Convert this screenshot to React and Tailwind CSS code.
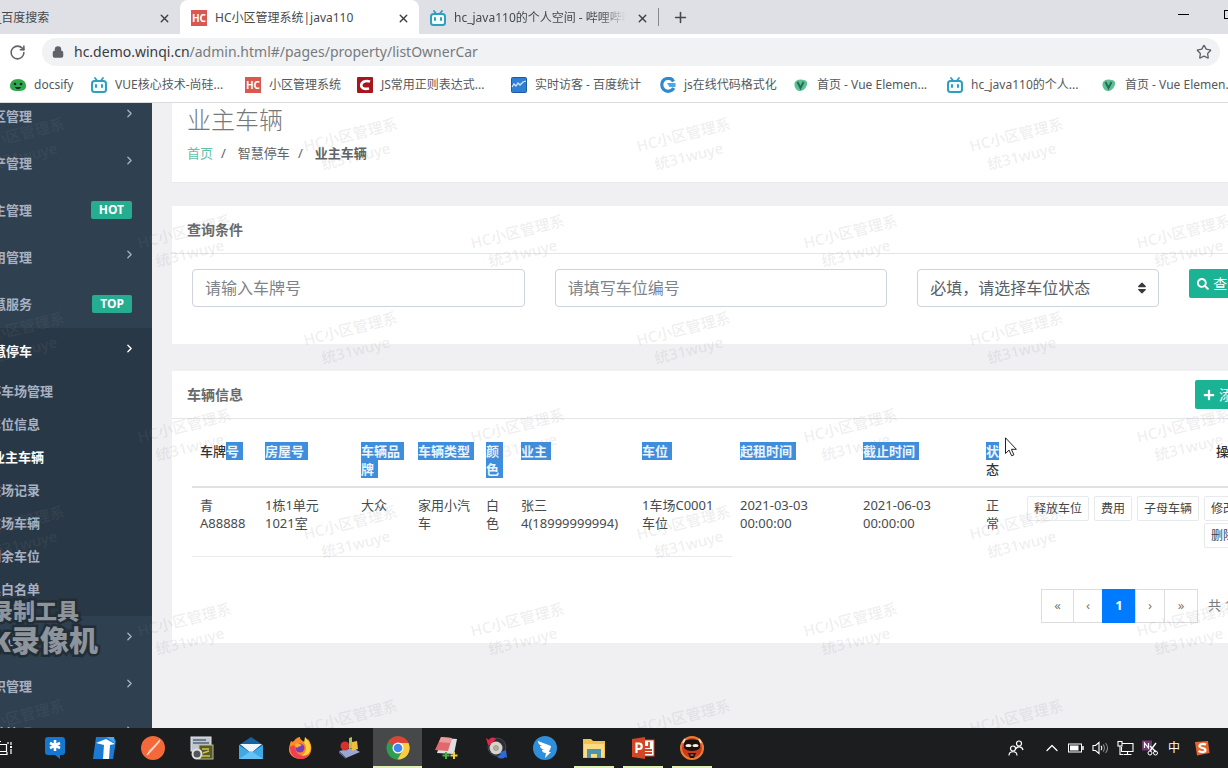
import React, { useState } from "react";
import { ChevronRight, ChevronUp, Lock, Plus, RotateCw, Star, X } from "lucide-react";
import { FaPlus, FaSearch, FaSort } from "react-icons/fa";

/* ---------- small site icons ---------- */

const HcIcon = () => (
  <span className="flex h-4 w-4 shrink-0 items-center justify-center bg-[#d9584f] text-[10px] leading-none font-bold text-white">
    HC
  </span>
);

const BiliIcon = () => (
  <svg className="h-4 w-4 shrink-0" viewBox="0 0 16 16" fill="none">
    <path d="M4 1l2 2.5M12 1l-2 2.5" stroke="#2f9fc0" strokeWidth="1.8" strokeLinecap="round" />
    <rect x="1" y="4" width="14" height="11" rx="2.5" stroke="#2f9fc0" strokeWidth="2" fill="#f4fcff" />
    <path d="M5 8v2M11 8v2" stroke="#2f9fc0" strokeWidth="2" strokeLinecap="round" />
  </svg>
);

const DocsifyIcon = () => (
  <svg className="h-4 w-4 shrink-0" viewBox="0 0 16 16">
    <path d="M8 2c5 0 8 3 8 7 0 4-3 5-8 5s-8-1-8-5c0-4 3-7 8-7z" fill="#2fa84a" />
    <circle cx="5" cy="7" r="1.3" fill="#123" />
    <circle cx="11" cy="7" r="1.3" fill="#123" />
    <path d="M5.5 10.5c1.5 1.6 3.5 1.6 5 0z" fill="#123" stroke="#123" />
  </svg>
);

const CsdnIcon = () => (
  <svg className="h-4 w-4 shrink-0" viewBox="0 0 16 16">
    <rect width="16" height="16" rx="1" fill="#a8161d" />
    <path d="M13 4.6C9 3 4.500 4.500 4.200 8.200 4 11.500 8 12.500 12 11.400" fill="none" stroke="#fff" strokeWidth="2.600" />
  </svg>
);

const ChartIcon = () => (
  <svg className="h-4 w-4 shrink-0" viewBox="0 0 16 16">
    <rect x="0.500" y="0.500" width="15" height="15" rx="1" fill="#2f7fd6" stroke="#205a9c" />
    <path d="M1 10l2-3 2 2 2-3 2 2 3-3 3-1" fill="none" stroke="#d5ecff" strokeWidth="1.300" />
  </svg>
);

const JsIcon = () => (
  <svg className="h-4 w-4 shrink-0" viewBox="0 0 16 16">
    <path
      d="M13.500 4.500C12 1.500 9 1 7 1.500 3.500 2.200 1.800 5 1.800 8c0 3.500 2.700 6.300 6.200 6.300 2.500 0 4.500-1 5.800-3.300"
      fill="none"
      stroke="#2e8ad0"
      strokeWidth="3.200"
    />
    <path d="M7 6h8.500v4H9.500z" fill="#4ea6e4" />
  </svg>
);

const VueIcon = () => (
  <svg className="h-4 w-4 shrink-0" viewBox="0 0 16 16">
    <path d="M2 5c2-3 6-3 9-2 3 .5 4 3 2.500 6-1 3-4 5-7 5S0 9 2 5z" fill="#5cc094" />
    <path d="M4.500 5l3 6 3-6" fill="none" stroke="#2a6b55" strokeWidth="2" />
  </svg>
);

/* ---------- browser chrome ---------- */

const bookmarks = [
  { label: "docsify", Icon: DocsifyIcon, width: "w-[81px]" },
  { label: "VUE核心技术-尚硅...", Icon: BiliIcon, width: "w-[154px]" },
  { label: "小区管理系统", Icon: HcIcon, width: "w-[112px]" },
  { label: "JS常用正则表达式...", Icon: CsdnIcon, width: "w-[154px]" },
  { label: "实时访客 - 百度统计", Icon: ChartIcon, width: "w-[149px]" },
  { label: "js在线代码格式化", Icon: JsIcon, width: "w-[133px]" },
  { label: "首页 - Vue Elemen...", Icon: VueIcon, width: "w-[154px]" },
  { label: "hc_java110的个人...", Icon: BiliIcon, width: "w-[154px]" },
  { label: "首页 - Vue Elemen...", Icon: VueIcon, width: "w-[154px]" },
];

const CloseButton = () => (
  <button aria-label="关闭标签页" className="flex h-4 w-4 shrink-0 items-center justify-center text-[#3c4043]">
    <X size={13} strokeWidth={2.5} />
  </button>
);

const TabBar = () => (
  <div className="flex h-[34px] shrink-0 items-stretch bg-[#dee0e6] text-xs whitespace-nowrap text-[#45494d]">
    <div className="flex w-[180px] items-center justify-between pt-0.5 pr-2">
      <span className="-ml-1">_百度搜索</span>
      <CloseButton />
    </div>
    <div className="flex w-[239px] items-center gap-2 rounded-t-lg bg-white pt-0.5 pr-2 pl-[11px]">
      <HcIcon />
      <span className="flex-1">HC小区管理系统|java110</span>
      <CloseButton />
    </div>
    <div className="flex w-[239px] items-center gap-2 pt-0.5 pr-2 pl-[11px]">
      <BiliIcon />
      <span className="flex-1 overflow-hidden [mask-image:linear-gradient(to_right,#000_85%,transparent)]">
        hc_java110的个人空间 - 哔哩哔哩
      </span>
      <CloseButton />
    </div>
    <div className="my-2 w-px bg-[#85888d]" />
    <button aria-label="新建标签页" className="ml-[11px] flex w-5 items-center justify-center">
      <Plus size={17} strokeWidth={2.2} />
    </button>
    <div className="ml-auto flex items-center gap-[35px] pb-1.5 text-black">
      <button aria-label="最小化" className="h-px w-[11px] bg-black" />
      <button aria-label="最大化" className="h-[9px] w-[4px] border border-r-0 border-black" />
    </div>
  </div>
);

const AddressBar = () => (
  <div className="flex h-9 shrink-0 items-center bg-white pr-2 pl-[9px]">
    <button aria-label="重新加载" className="mr-4 text-[#5f6368]">
      <RotateCw size={17} strokeWidth={2.2} />
    </button>
    <div className="flex h-7 flex-1 items-center gap-2.5 rounded-full bg-[#f1f2f4] pr-2 pl-2.5">
      <Lock size={12} strokeWidth={3} fill="#5f6368" className="text-[#5f6368]" />
      <span className="flex-1 text-sm text-[#777b7f]">
        <span className="text-[#3a3c3f]">hc.demo.winqi.cn</span>
        /admin.html#/pages/property/listOwnerCar
      </span>
      <Star size={16} className="text-[#5f6368]" />
    </div>
  </div>
);

const BookmarkBar = () => (
  <nav className="flex h-[33px] shrink-0 items-center overflow-hidden border-b border-[#d9dbdf] bg-white pb-0.5 pl-2.5 text-xs whitespace-nowrap text-[#55585c]">
    {bookmarks.map(({ label, Icon, width }, index) => (
      <a key={index} href="#" className={`flex shrink-0 items-center gap-2 ${width}`}>
        <Icon />
        {label}
      </a>
    ))}
  </nav>
);

/* ---------- sidebar ---------- */

const topMenus = [
  { label: "小区管理" },
  { label: "资产管理" },
  { label: "业主管理", badge: "HOT" },
  { label: "费用管理" },
  { label: "智慧服务", badge: "TOP" },
];

const parkingMenus = ["停车场管理", "车位信息", "业主车辆", "进场记录", "在场车辆", "剩余车位", "黑白名单"];

const MenuItem = ({ label, badge, active }) => (
  <a
    href="#"
    className={`flex h-[47px] items-center justify-between pr-5 pl-12 ${active ? "text-white" : "text-[#a7b1c2]"}`}
  >
    <span>{label}</span>
    {badge ? (
      <span className="mb-0.5 rounded-xs bg-[#25ad8f] px-2 text-xs leading-[18px] font-bold text-white">{badge}</span>
    ) : (
      <ChevronRight size={13} strokeWidth={2.5} className="-mr-1 mb-1.5" />
    )}
  </a>
);

const Sidebar = () => (
  <aside className="w-[152px] shrink-0 overflow-hidden bg-[#2f4050] text-[13px] font-semibold">
    <nav className="-mt-2.5 -ml-[68px] w-[220px]">
      {topMenus.map((menu) => (
        <MenuItem key={menu.label} {...menu} />
      ))}
      <div className="bg-[#293846] pb-2.5">
        <MenuItem label="智慧停车" active />
        {parkingMenus.map((label) => (
          <a
            key={label}
            href="#"
            className={`flex h-[33px] items-center ${
              label === "业主车辆" ? "pl-15 font-bold text-white" : "pl-14 text-[#a7b1c2]"
            }`}
          >
            {label}
          </a>
        ))}
      </div>
      <MenuItem label="设备管理" />
      <MenuItem label="组织管理" />
      <MenuItem label="系统管理" />
    </nav>
  </aside>
);

/* ---------- page ---------- */

const Card = ({ title, action, children }) => (
  <section className="bg-white">
    <header className="flex h-12 items-center justify-between border-b border-[#e3e6e8] px-[15px]">
      <h5 className="text-sm font-semibold text-[#676a6c]">{title}</h5>
      {action}
    </header>
    {children}
  </section>
);

const GreenButton = ({ Icon, children }) => (
  <button className="flex h-[29px] shrink-0 items-center gap-1 rounded-xs bg-[#1ab394] px-2 text-sm whitespace-nowrap text-white">
    <Icon size={12} />
    {children}
  </button>
);

const SearchCard = () => {
  const [plate, setPlate] = useState("");
  const [space, setSpace] = useState("");
  const inputClass =
    "h-[38px] w-full rounded border border-[#ced4da] bg-white px-3 text-base text-[#5a6067] placeholder:text-[#7d848a]";

  return (
    <Card title="查询条件">
      <div className="grid grid-cols-12 gap-x-[30px] px-5 pt-[15px] pb-[37px]">
        <div className="col-span-4">
          <input
            aria-label="车牌号"
            className={inputClass}
            placeholder="请输入车牌号"
            value={plate}
            onChange={(e) => setPlate(e.target.value)}
          />
        </div>
        <div className="col-span-4">
          <input
            aria-label="车位编号"
            className={inputClass}
            placeholder="请填写车位编号"
            value={space}
            onChange={(e) => setSpace(e.target.value)}
          />
        </div>
        <div className="relative col-span-3">
          <select aria-label="车位状态" className={`${inputClass} appearance-none`}>
            <option>必填，请选择车位状态</option>
          </select>
          <FaSort size={14} className="pointer-events-none absolute top-3 right-2.5 text-[#343a40]" />
        </div>
        <div className="col-span-1">
          <GreenButton Icon={FaSearch}>查询</GreenButton>
        </div>
      </div>
    </Card>
  );
};

// plain is the part of a heading that the text selection leaves out
const columns = [
  { plain: "车牌", selected: "号", width: "w-[65px]" },
  { selected: "房屋号", width: "w-24" },
  { selected: "车辆品牌", width: "w-[57px]" },
  { selected: "车辆类型", width: "w-[68px]" },
  { selected: "颜色", width: "w-[35px]" },
  { selected: "业主", width: "w-[121px]" },
  { selected: "车位", width: "w-[98px]" },
  { selected: "起租时间", width: "w-[123px]" },
  { selected: "截止时间", width: "w-[123px]" },
];

const row = [
  "青A88888",
  "1栋1单元1021室",
  "大众",
  "家用小汽车",
  "白色",
  "张三4(18999999994)",
  "1车场C0001车位",
  "2021-03-03 00:00:00",
  "2021-06-03 00:00:00",
  "正常",
];

const actions = ["释放车位", "费用", "子母车辆", "修改", "删除"];

const CarTable = () => (
  <table className="w-full table-fixed text-left text-[13px] leading-[18px] text-[#484b4e]">
    <thead>
      <tr className="border-b-2 border-[#dfe2e5] align-top">
        {columns.map((col) => (
          <th key={col.selected} className={`p-2 font-bold text-[#303336] ${col.width}`}>
            {col.plain && <span className="font-medium">{col.plain}</span>}
            <span className="box-decoration-clone bg-[#3f8ddd] text-[#e9f5ff] shadow-[4px_0_0_#3f8ddd]">
              {col.selected}
            </span>
          </th>
        ))}
        <th className="w-10 p-2 font-medium text-[#303336]">
          <span className="bg-[#3f8ddd] font-bold text-[#e9f5ff]">状</span>态
        </th>
        <th className="p-2 text-right font-medium text-[#303336]">操作</th>
      </tr>
    </thead>
    <tbody>
      <tr className="align-top">
        {row.map((value, index) => (
          <td key={index} className={`p-2 ${index < 7 ? "border-b border-[#e7eaec]" : ""}`}>
            {value}
          </td>
        ))}
        <td className="p-2">
          <div className="flex flex-wrap justify-end gap-x-[5px] gap-y-0.5">
            {actions.map((label) => (
              <button
                key={label}
                className="h-[25px] rounded-xs border border-[#e7eaec] bg-white px-1.5 text-xs text-[#404447]"
              >
                {label}
              </button>
            ))}
          </div>
        </td>
      </tr>
    </tbody>
  </table>
);

const pages = [
  { label: "«", width: "w-[33px]" },
  { label: "‹", width: "w-[30px]" },
  { label: "1", width: "w-[34px]", active: true },
  { label: "›", width: "w-[30px]" },
  { label: "»", width: "w-[34px]" },
];

const Pagination = () => (
  <div className="mt-8 flex items-center justify-end text-[13px] text-[#777a7c]">
    {pages.map(({ label, width, active }) => (
      <button
        key={label}
        className={`-ml-px h-[34px] border ${width} ${
          active ? "border-[#007bff] bg-[#007bff] font-bold text-white" : "border-[#dddddd] bg-white"
        }`}
      >
        {label}
      </button>
    ))}
    <span className="w-[52px] pl-2.5 whitespace-nowrap">共 1条</span>
  </div>
);

const Page = () => (
  <main className="min-w-0 flex-1 overflow-hidden bg-[#f0f0f3]">
    <div className="-mr-[62px] px-5">
      <div className="h-20 border-b border-[#e7eaec] bg-white px-[15px]">
        <h2 className="text-2xl leading-[34px] font-light text-[#76797b]">业主车辆</h2>
        <ol className="mt-1.5 flex text-[13px] leading-5 text-[#606365]">
          <li>
            <a href="#" className="text-[#62bfa9]">首页</a>
          </li>
          <li className="before:pr-3 before:pl-2 before:content-['/']">智慧停车</li>
          <li className="font-semibold before:pr-3 before:pl-2 before:font-normal before:content-['/']">业主车辆</li>
        </ol>
      </div>
      <div className="mt-[23px] flex flex-col gap-[27px]">
        <SearchCard />
        <Card title="车辆信息" action={<GreenButton Icon={FaPlus}>添加</GreenButton>}>
          <div className="px-5 pt-[15px] pb-5">
            <CarTable />
            <Pagination />
          </div>
        </Card>
      </div>
    </div>
  </main>
);

/* ---------- overlays ---------- */

const marks = [];
for (let r = 0; r < 7; r++) {
  for (let c = 0; c < 4; c++) {
    marks.push({ left: (r % 2 ? 139 : -28) + c * 333, top: 20 + r * 97 });
  }
}

const Watermarks = () => (
  <div
    aria-hidden="true"
    className="pointer-events-none absolute inset-x-0 top-[103px] bottom-10 overflow-hidden select-none"
  >
    {marks.map((mark, index) => (
      <div
        key={index}
        className="absolute w-24 -rotate-14 text-center text-[15px] leading-[22px] font-medium whitespace-nowrap text-[#808080]/15"
        style={{ left: mark.left, top: mark.top }}
      >
        HC小区管理系
        <br />
        统31wuye
      </div>
    ))}
  </div>
);

const RecorderMark = () => (
  <div
    aria-hidden="true"
    className="pointer-events-none absolute bottom-[110px] left-0 flex w-[98px] flex-col items-end font-black whitespace-nowrap text-[#8d949b] [paint-order:stroke] [-webkit-text-stroke:5px_#222d36]"
  >
    <span className="mr-[19px] text-[22px] leading-[28px]">录制工具</span>
    <span className="text-[29px] leading-[34px]">K录像机</span>
  </div>
);

const Cursor = () => (
  <svg
    aria-hidden="true"
    className="pointer-events-none absolute top-[437px] left-[1005px] h-5 w-3"
    viewBox="0 0 12 20"
  >
    <path d="M0.5 0.8v15.700l3.600-3.400 2.500 5.700 2.300-1-2.500-5.500h5z" fill="#fff" stroke="#222" />
  </svg>
);

/* ---------- taskbar ---------- */

const appIcons = [
  {
    name: "聊天",
    art: (
      <>
        <path d="M5 1h14q3 0 3 3v12q0 3-3 3h-2l0 4-5-4H5q-3 0-3-3V4q0-3 3-3z" fill="#1577cf" />
        <path d="M12 4v11M7 7l10 5M17 7L7 12" stroke="#fff" strokeWidth="2.600" />
      </>
    ),
  },
  {
    name: "文档",
    art: (
      <>
        <path d="M4 1h17l3 4-3 18H1z" fill="#1b7ad4" />
        <path d="M4 7l10-4 9 5-5 1-1 14h-6l1-14z" fill="#fff" />
        <path d="M14 1h8l1 6z" fill="#4aaaf0" />
      </>
    ),
  },
  {
    name: "Postman",
    art: (
      <>
        <circle cx="12" cy="12" r="12" fill="#f4693a" />
        <path d="M18 5L8 14l-2 5 5-4 8-9z" fill="#f9a988" />
        <path d="M19 4L6 19" stroke="#ffe1d4" strokeWidth="1.200" />
      </>
    ),
  },
  {
    name: "工具",
    art: (
      <>
        <rect x="1" y="1" width="20" height="14" fill="#bfc6cf" stroke="#e3e6ea" />
        <path d="M3 4h13M3 7h16" stroke="#56637a" strokeWidth="1.500" />
        <rect x="9" y="9" width="14" height="14" fill="#57592f" stroke="#b9b98f" />
        <path d="M12 13h7M13 17l6-2M12 20h8" stroke="#cfc83c" strokeWidth="1.500" />
        <circle cx="7" cy="18" r="4.500" fill="#555" stroke="#dfe2e4" strokeWidth="2" />
      </>
    ),
  },
  {
    name: "邮件",
    art: (
      <>
        <path d="M0 9L12 1l12 8v14H0z" fill="#15629e" />
        <path d="M1 8h22l-11 9z" fill="#eef6fb" />
        <path d="M0 9l12 8 12-8v14H0z" fill="#3fa9e8" />
        <path d="M0 23L12 15l12 8z" fill="#67c2f4" />
      </>
    ),
  },
  {
    name: "Firefox",
    art: (
      <>
        <path d="M3 5c1 1 2 1 3 0 1-2 4-4 6-4 0 3 3 4 5 5l3-3c3 4 4 8 3 12-1 5-6 8-11 8S1 19 1 14c0-4 1-6 2-9z" fill="#ff8a25" />
        <path d="M17 1c4 4 7 9 5 14-2 4-6 6-9 5 5-3 7-8 3-13z" fill="#ffd23e" />
        <path d="M2 11c0 8 5 12 11 12 4 0 7-2 9-5-5 3-12 2-14-3L6 9z" fill="#ee3f54" />
        <circle cx="12" cy="12" r="4.500" fill="#7a3fb8" />
        <path d="M7 8c3-2 5 0 7 1-2 2-4 1-5 3-1-1-2-2-2-4z" fill="#ffae35" />
      </>
    ),
  },
  {
    name: "图形",
    art: (
      <>
        <path d="M2 15l14-3 7 4-14 6z" fill="#98a6d2" />
        <path d="M2 15l7 7v1l-7-6z" fill="#58669a" />
        <circle cx="8" cy="10" r="4.500" fill="#d3332b" />
        <path d="M12 2l3-1v11l-3 1z" fill="#a4c653" />
        <path d="M15 6l5-1 1 8-6 2z" fill="#f1bd41" />
      </>
    ),
  },
  {
    name: "Chrome",
    active: true,
    running: true,
    art: (
      <>
        <circle cx="12" cy="12" r="11.500" fill="#2e9f50" />
        <path d="M12 12L2 6.300A11.500 11.500 0 0 1 22.500 7z" fill="#db4437" />
        <path d="M12 7h10.500A11.500 11.500 0 0 1 11.500 23.500L17 14z" fill="#fbcc3f" />
        <circle cx="12" cy="12" r="5.500" fill="#fff" />
        <circle cx="12" cy="12" r="4.300" fill="#4285f4" />
      </>
    ),
  },
  {
    name: "编辑器",
    art: (
      <>
        <path d="M7 2l15 1-3 15-17-1z" fill="#dfdfe2" />
        <path d="M6 1l11 1-4 13L0 14z" fill="#e2686c" />
        <path d="M6 1l11 1-2 5-11-1z" fill="#ee9a9b" />
        <path d="M11 16v7M7.500 19.500h7" stroke="#43b344" strokeWidth="2" />
        <path d="M19 16v7M15.500 19.500h7" stroke="#f3cf3f" strokeWidth="2" />
      </>
    ),
  },
  {
    name: "同步",
    art: (
      <>
        <circle cx="13" cy="11" r="9" fill="#2c2e33" stroke="#44474c" />
        <path d="M2 2l2 7 7-1-2-2 3-3C9 1 7 1 5 4z" fill="#dc2c4c" />
        <path d="M23 22l-1-8-8 3 3 1-4 3c4 2 6 2 8 0z" fill="#2d6bd8" />
        <circle cx="12" cy="12" r="6.500" fill="#d8d4cb" />
        <circle cx="12" cy="12" r="2.500" fill="#b3ada0" stroke="#8d8778" strokeWidth="0.600" />
      </>
    ),
  },
  {
    name: "钉钉",
    art: (
      <>
        <circle cx="12" cy="12" r="12" fill="#2f8fdb" />
        <path d="M5 5c4 2 9 3 13 5 0 3-2 4-2 6h2l-6 6 1-5c-3 0-4-2-4-3l2-.5C8 13 7 11 7 10l2 0C6 9 5 7 5 5z" fill="#fff" />
      </>
    ),
  },
  {
    name: "文件资源管理器",
    running: true,
    art: (
      <>
        <path d="M1 3h8l2 2h12v17H1z" fill="#f2c14e" />
        <path d="M2 8h20v13H2z" fill="#fbdc85" />
        <path d="M5 13h14v9h-4v-4H9v4H5z" fill="#4c95ab" />
      </>
    ),
  },
  {
    name: "PowerPoint",
    running: true,
    art: (
      <>
        <rect x="10" y="4" width="13" height="16" fill="#fff" stroke="#d24625" />
        <path d="M18 6v5h-4M14 14h7M14 17h7" fill="none" stroke="#d24625" strokeWidth="1.800" />
        <path d="M1 3l13-2v22L1 21z" fill="#d24625" />
        <path d="M5.500 17V7.500h2.500a2.700 2.700 0 0 1 0 5.500H5.500" fill="none" stroke="#fff" strokeWidth="2.200" />
      </>
    ),
  },
  {
    name: "录屏",
    running: true,
    art: (
      <>
        <circle cx="12" cy="12" r="11" fill="#c63c1c" stroke="#ee7b33" strokeWidth="2" />
        <path d="M4 5c4-2 12-2 16 0v7c-3 4-13 4-16 0z" fill="#1d100d" />
        <ellipse cx="8.500" cy="9.500" rx="3" ry="1.600" fill="#f7efe7" />
        <ellipse cx="15.500" cy="9.500" rx="3" ry="1.600" fill="#f7efe7" />
        <path d="M3 7l2-4M21 7l-2-4" stroke="#fbdcb5" strokeWidth="1.800" />
        <path d="M8 17h8l-2 5h-4z" fill="#1d100d" />
        <path d="M10.500 19h3" stroke="#f19a54" />
      </>
    ),
  },
];

const Tray = () => (
  <div className="ml-auto flex items-center text-white">
    <svg className="mr-[18px] h-4 w-4" viewBox="0 0 16 16" fill="none" stroke="currentColor" strokeWidth="1.200">
      <circle cx="11" cy="3.500" r="2.500" />
      <path d="M8 9c1-3 6-3 7 1" />
      <circle cx="5" cy="8.500" r="2.500" />
      <path d="M1 15.500c0-5 8-5 8 0" />
    </svg>
    <button aria-label="显示隐藏的图标" className="mr-1.5">
      <ChevronUp size={20} strokeWidth={1.5} />
    </button>
    <svg className="mr-2 h-4 w-4" viewBox="0 0 16 16">
      <rect x="0.500" y="4" width="13" height="8" fill="none" stroke="#fff" />
      <rect x="2" y="5.500" width="8.500" height="5" fill="#fff" />
      <path d="M15 6v4" stroke="#fff" strokeWidth="1.500" />
    </svg>
    <svg className="mr-2 h-4 w-[17px]" viewBox="0 0 17 16" fill="none" stroke="#fff" strokeWidth="1.100">
      <path d="M1 5.500h2.500L7 2.500v11L3.500 10.500H1z" />
      <path d="M9 6c1 1 1 3 0 4" />
      <path d="M11 4.500c2 2 2 5 0 7M13.500 3c2.500 3 2.500 7 0 10" stroke="#888" />
    </svg>
    <svg className="mr-2 h-4 w-[17px]" viewBox="0 0 17 16" fill="none" stroke="#fff" strokeWidth="1.100">
      <path d="M5 3.500h11v8H4.500V7M10.500 11.500v3M6.500 14.500h8" />
      <rect x="1" y="1.500" width="4" height="4.500" />
      <path d="M3 6v8.500h3" />
    </svg>
    <svg className="mr-2.5 h-4 w-4" viewBox="0 0 16 16" fill="none">
      <rect width="10" height="10" y="0.500" fill="#713a74" />
      <path d="M2.500 8V3l4 5V3" stroke="#fff" strokeWidth="1.200" />
      <path d="M14 3l-6 8M8 6l6 6" stroke="#fff" strokeWidth="1.400" />
      <circle cx="8" cy="13" r="2" stroke="#fff" />
      <circle cx="13.500" cy="13" r="2" stroke="#fff" />
    </svg>
    <span className="mr-3.5 text-xs">中</span>
    <svg className="mr-[18px] h-4 w-4" viewBox="0 0 16 16">
      <path d="M1 2l13-1 1.500 12L3 15.500z" fill="#e2662e" />
      <path d="M12 4.500C8 3 5 4.500 5.500 6.500s6 1 6 3.500-4 2.500-7 1" fill="none" stroke="#fff" strokeWidth="2.200" />
    </svg>
  </div>
);

const Taskbar = () => (
  <footer className="flex h-10 shrink-0 overflow-hidden bg-[#1c1d1f]">
    <button aria-label="任务视图" className="flex w-[30px] items-center">
      <svg className="h-4 w-[13px]" viewBox="0 0 13 16" fill="none" stroke="#fff" strokeWidth="1.200">
        <path d="M0 4.500h6.500v7H0M0 1.500h1M8 2v2M0 14.500h7V12" />
        <path d="M11 2v3M11 9v5" />
        <path d="M10 7h2" strokeWidth="2" />
      </svg>
    </button>
    {appIcons.map(({ name, art, active, running }) => (
      <button
        key={name}
        aria-label={name}
        className={`flex w-[49px] flex-col items-center justify-between pt-2 ${active ? "bg-[#46484a]" : ""}`}
      >
        <svg className="h-6 w-6" viewBox="0 0 24 24">
          {art}
        </svg>
        {running && <span className={`h-0.5 bg-[#dcefb4] ${active ? "w-full" : "w-10"}`} />}
      </button>
    ))}
    <Tray />
  </footer>
);

const App = () => (
  <div className="relative flex h-screen flex-col overflow-hidden bg-white font-['Noto_Sans','Noto_Sans_CJK_SC',sans-serif]">
    <TabBar />
    <AddressBar />
    <BookmarkBar />
    <div className="flex min-h-0 flex-1">
      <Sidebar />
      <Page />
    </div>
    <Taskbar />
    <Watermarks />
    <RecorderMark />
    <Cursor />
  </div>
);

export default App;
